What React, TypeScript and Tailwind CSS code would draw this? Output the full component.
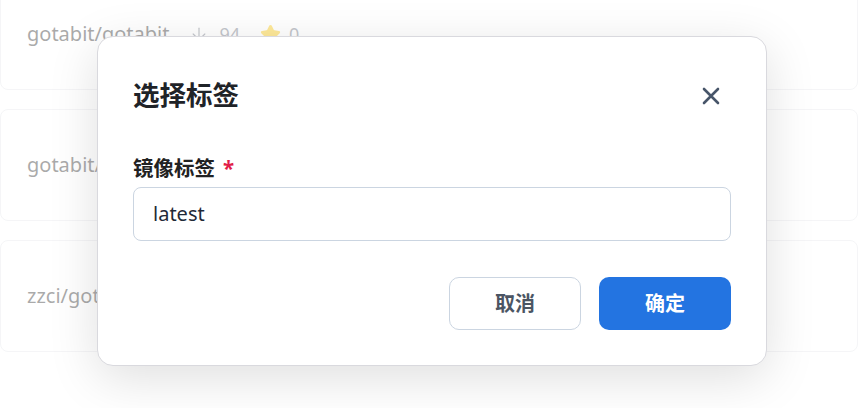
import { ArrowDown, Star } from 'lucide-react';

const repos = [
  { name: 'gotabit/gotabit', pulls: 94, stars: 0 },
  { name: 'gotabit/gotabit-node', pulls: 12, stars: 0 },
  { name: 'zzci/gotabit', pulls: 7, stars: 0 },
];

function CloseIcon() {
  return (
    <svg width="18" height="18" viewBox="0 0 18 18" fill="none">
      <path
        d="M2 2L16 16M16 2L2 16"
        stroke="#475569"
        strokeWidth="2.6"
        strokeLinecap="round"
      />
    </svg>
  );
}

export default function App() {
  return (
    <div
      className="relative h-[408px] w-[858px] overflow-hidden bg-white"
      style={{ fontFamily: '"Noto Sans", "Noto Sans CJK SC", sans-serif' }}
    >
      {/* 镜像列表 */}
      <div className="-mt-[22px] flex flex-col gap-[19px]">
        {repos.map((repo) => (
          <div
            key={repo.name}
            className="flex h-[112px] items-center gap-5 rounded-lg border border-gray-200 px-[26px]"
          >
            <div className="text-[20px] text-[#2b2b2b]">{repo.name}</div>
            <div className="flex items-center gap-2.5 text-[18px] text-[#6b7280]">
              <ArrowDown size={20} strokeWidth={1.4} />
              <span>{repo.pulls}</span>
            </div>
            <div className="flex items-center gap-2 text-[18px] text-[#6b7280]">
              <Star size={21} className="fill-yellow-400 text-yellow-400" />
              <span>{repo.stars}</span>
            </div>
          </div>
        ))}
      </div>

      {/* 遮罩 + 弹窗 */}
      <div className="absolute inset-0 flex items-center justify-center bg-white/60 pb-[6px] pl-[6px]">
        <div className="flex w-[670px] flex-col rounded-2xl border border-[#d9d9de] bg-white p-[35px] shadow-[0_12px_50px_rgba(0,0,0,0.13)]">
          <div className="flex h-12 items-center justify-between">
            <div className="text-[26.5px] font-bold text-[#1f2328]">选择标签</div>
            <button type="button" className="mr-[11px] flex items-center">
              <CloseIcon />
            </button>
          </div>

          <div className="mt-[34px] flex h-7 items-center text-[20.5px] font-bold text-[#222]">
            <span>镜像标签</span>
            <span className="ml-2 text-[#e11d48]">*</span>
          </div>
          <div className="mt-[5px] flex h-[54px] items-center rounded-lg border border-[#cbd5e1] pl-[19px] text-[20px] text-[#1f2937]">
            latest
          </div>

          <div className="mt-[36px] flex justify-end gap-[18px]">
            <button
              type="button"
              className="flex h-[53px] w-[132px] items-center justify-center rounded-[10px] border border-[#cbd5e1] text-[20px] font-bold text-[#4b5563]"
            >
              取消
            </button>
            <button
              type="button"
              className="flex h-[53px] w-[132px] items-center justify-center rounded-[10px] bg-[#2374e1] text-[20px] font-bold text-white"
            >
              确定
            </button>
          </div>
        </div>
      </div>
    </div>
  );
}
